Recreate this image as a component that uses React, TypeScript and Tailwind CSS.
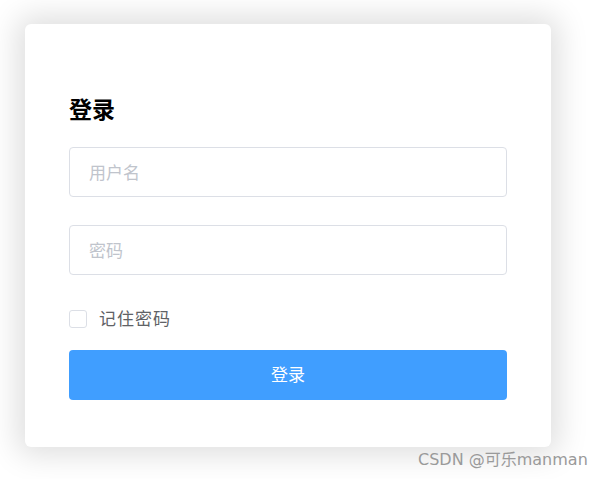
import React from 'react';

export default function App() {
 return (
 <div
 className="relative w-[603px] h-[479px] bg-white overflow-hidden"
 style={{ fontFamily: '"Noto Sans", "Noto Sans CJK SC", sans-serif' }}
 >
 <div className="pt-[24px] pl-[25px]">
 <div className="w-[526px] h-[423px] bg-white rounded-[6px] shadow-[0_0_30px_8px_rgba(0,0,0,0.13)] px-[44px] pt-[70px]">
 {/* Title */}
 <h1 className="text-[23px] leading-[30px] font-bold text-black">登录</h1>

 {/* Inputs */}
 <div className="mt-[23px] flex flex-col gap-[28px]">
 <input
 placeholder="用户名"
 className="w-[438px] h-[50px] rounded-[4px] border border-[#dcdfe6] px-[19px] text-[17px] outline-none placeholder:text-[#c0c4cc]"
 />
 <input
 placeholder="密码"
 type="password"
 className="w-[438px] h-[50px] rounded-[4px] border border-[#dcdfe6] px-[19px] text-[17px] outline-none placeholder:text-[#c0c4cc]"
 />
 </div>

 {/* Remember */}
 <label className="mt-[34px] flex items-center gap-[12px] h-[20px]">
 <span className="w-[18px] h-[18px] rounded-[3px] border border-[#dcdfe6] bg-white"></span>
 <span className="text-[17px] tracking-[1px] text-[#606266]">记住密码</span>
 </label>

 {/* Button */}
 <button className="mt-[21px] w-[438px] h-[50px] rounded-[4px] bg-[#409eff] text-white text-[17px]">
 登录
 </button>
 </div>
 </div>

 <div
 className="absolute left-[418px] top-[449px] text-[16px] text-[#9a9a9a] leading-[22px] whitespace-nowrap"
 style={{ fontFamily: '"DejaVu Sans", "Noto Sans CJK SC", sans-serif' }}
 >
 CSDN @可乐manman
 </div>
 </div>
 );
}
